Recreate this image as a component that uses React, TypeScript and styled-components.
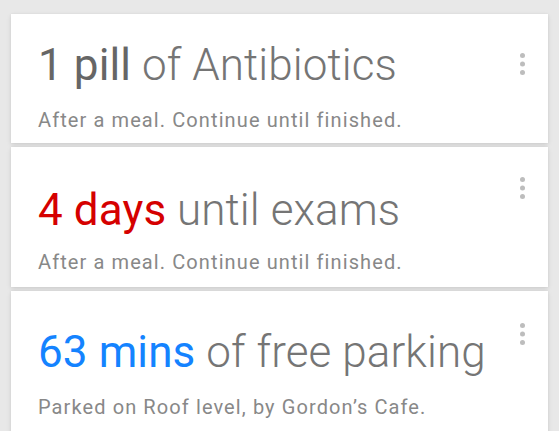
import React from "react";
import styled, { createGlobalStyle } from "styled-components";

const Global = createGlobalStyle`
  html, body { margin: 0; padding: 0; background: #e8e8e8; }
  body { font-family: Roboto, "Noto Sans", sans-serif; overflow: hidden; }
`;

const Stack = styled.div`
  display: flex;
  flex-direction: column;
  gap: 4px;
  padding: 14px 11px 0 11px;
  height: 431px;
  box-sizing: border-box;
`;

const Card = styled.section<{ $top: number; $bottom: number }>`
  background: #fff;
  box-shadow: 0 2px 5px rgba(0, 0, 0, 0.1), 0 0 2px rgba(0, 0, 0, 0.06);
  display: grid;
  grid-template-columns: 1fr auto;
  padding: ${(p) => p.$top}px 23px ${(p) => p.$bottom}px 27px;
`;

const Title = styled.h2`
  margin: 0;
  font-size: 44px;
  line-height: 52px;
  font-weight: 300;
  color: #757575;
  letter-spacing: 0.1px;
  white-space: nowrap;
`;

const Emph = styled.span<{ $color: string }>`
  font-weight: 400;
  color: ${(p) => p.$color};
`;

const Sub = styled.p<{ $gap: number }>`
  grid-column: 1 / span 2;
  margin: ${(p) => p.$gap}px 0 0;
  font-size: 20px;
  line-height: 24px;
  color: #888;
  letter-spacing: 1.1px;
  white-space: nowrap;
`;

const Menu = styled.button<{ $offset: number }>`
  align-self: start;
  margin-top: ${(p) => p.$offset}px;
  border: 0;
  padding: 0;
  background: none;
  width: 5px;
  height: 22px;
  display: block;
`;

const Dots = () => (
  <svg width="5" height="22" viewBox="0 0 5 22">
    <circle cx="2.5" cy="2.5" r="2.5" fill="#bdbdbd" />
    <circle cx="2.5" cy="11" r="2.5" fill="#bdbdbd" />
    <circle cx="2.5" cy="19.5" r="2.5" fill="#bdbdbd" />
  </svg>
);

type Item = {
  emph: string;
  color: string;
  rest: string;
  sub: string;
  top: number;
  bottom: number;
  gap: number;
  menu: number;
};

const items: Item[] = [
  { emph: "1 pill", color: "#666", rest: " of Antibiotics", sub: "After a meal. Continue until finished.", top: 25, bottom: 11, gap: 17, menu: 14 },
  { emph: "4 days", color: "#d50000", rest: " until exams", sub: "After a meal. Continue until finished.", top: 37, bottom: 13, gap: 14, menu: -7 },
  { emph: "63 mins", color: "#1483ff", rest: " of free parking", sub: "Parked on Roof level, by Gordon\u2019s Cafe.", top: 35, bottom: 20, gap: 17, menu: -3 },
];

export default function App() {
  return (
    <>
      <Global />
      <Stack>
        {items.map((it, i) => (
          <Card key={i} $top={it.top} $bottom={it.bottom}>
            <Title>
              <Emph $color={it.color}>{it.emph}</Emph>
              {it.rest}
            </Title>
            <Menu $offset={it.menu} aria-label="More">
              <Dots />
            </Menu>
            <Sub $gap={it.gap}>{it.sub}</Sub>
          </Card>
        ))}
      </Stack>
    </>
  );
}
